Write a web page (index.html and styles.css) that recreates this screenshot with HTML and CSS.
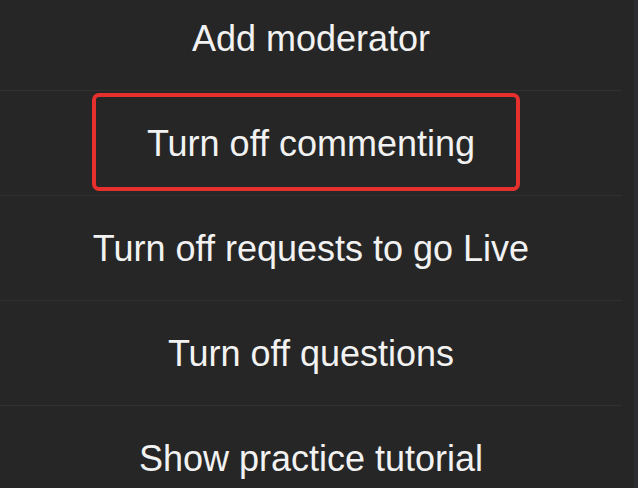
FILE: index.html
```html
<!DOCTYPE html>
<html>
<head>
    <title>Live options</title>
    <link rel="stylesheet" href="styles.css">
</head>
<body>
    <div class="sheet">
        <ul class="menu">
            <li class="menu-item">Add moderator</li>
            <li class="menu-item highlighted">Turn off commenting</li>
            <li class="menu-item">Turn off requests to go Live</li>
            <li class="menu-item">Turn off questions</li>
            <li class="menu-item">Show practice tutorial</li>
        </ul>
        <div class="edge"></div>
    </div>
</body>
</html>
```

FILE: styles.css
```css
:root {
    --background: #262626;
    --divider: #313131;
    --text: #f2f2f2;
    --mark: #e6302e;
}

html, body {
    margin: 0;
    height: 100%;
    overflow: hidden;
}

body {
    background: var(--background);
    font-family: 'Liberation Sans', Arial, sans-serif;
    color: var(--text);
}

.sheet {
    display: flex;
    height: 100%;
}

.menu {
    list-style: none;
    margin: -14px 0 0 0;
    padding: 0;
    width: 622px;
}

.menu-item {
    position: relative;
    padding-top: 33px;
    height: 71px;
    font-size: 36px;
    line-height: 40px;
    text-align: center;
    border-bottom: 1px solid var(--divider);
}

/* red annotation box around the selected option */
.highlighted::after {
    content: '';
    position: absolute;
    left: 92px;
    top: 2px;
    width: 428px;
    height: 98px;
    box-sizing: border-box;
    border: 4px solid var(--mark);
    border-radius: 7px;
}

.edge {
    margin-left: auto;
    width: 4px;
    background: #2b2d31;
}
```
